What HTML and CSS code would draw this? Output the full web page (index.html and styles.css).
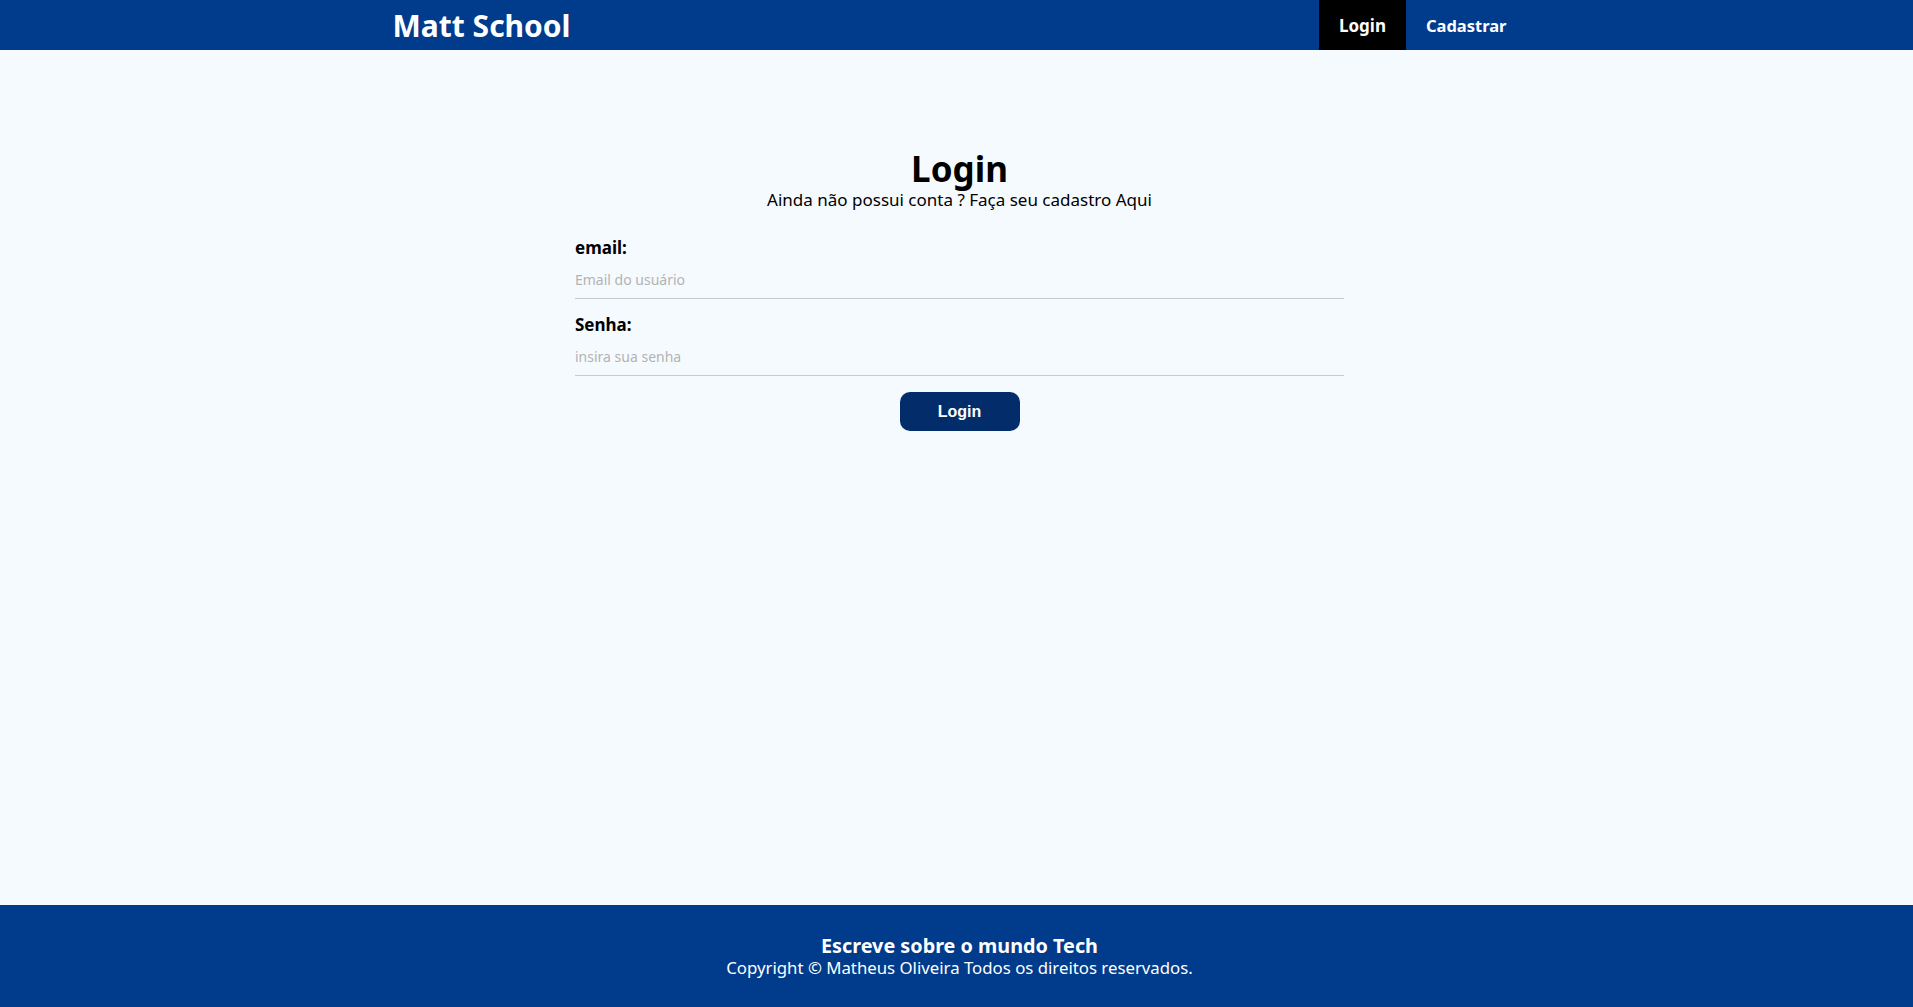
FILE: index.html
```html
<!DOCTYPE html>
<html lang="pt-BR">
<head>
<meta charset="utf-8">
<title>Matt School - Login</title>
<link rel="stylesheet" href="styles.css">
</head>
<body>
<header class="topbar">
  <div class="topbar-inner">
    <a class="brand" href="#">Matt School</a>
    <nav class="nav">
      <a class="nav-link active" href="#">Login</a>
      <a class="nav-link" href="#">Cadastrar</a>
    </nav>
  </div>
</header>
<main class="main">
  <section class="login">
    <h1 class="login-title">Login</h1>
    <p class="login-sub">Ainda não possui conta ? Faça seu cadastro Aqui</p>
    <form class="form">
      <label class="label" for="email">email:</label>
      <input class="input" id="email" type="text" placeholder="Email do usuário">
      <label class="label" for="senha">Senha:</label>
      <input class="input" id="senha" type="password" placeholder="insira sua senha">
      <button class="btn" type="button">Login</button>
    </form>
  </section>
</main>
<footer class="footer">
  <p class="footer-title">Escreve sobre o mundo Tech</p>
  <p class="footer-copy">Copyright © Matheus Oliveira Todos os direitos reservados.</p>
</footer>
</body>
</html>
```
FILE: styles.css
```css
* { box-sizing: border-box; }
html, body { height: 100%; }
body {
  margin: 0;
  background: #f5faff;
  font-family: "Noto Sans", "Open Sans", sans-serif;
  color: #000;
  display: flex;
  flex-direction: column;
  min-height: 100vh;
}
.topbar {
  background: #003b8c;
  height: 50px;
  flex-shrink: 0;
}
.topbar-inner {
  width: 1140px;
  margin: 0 auto;
  height: 100%;
  display: flex;
  align-items: center;
  justify-content: space-between;
}
.brand {
  color: #fff;
  text-decoration: none;
  font-weight: 700;
  font-size: 30px;
  padding-left: 6px;
}
.nav { display: flex; height: 100%; }
.nav-link {
  display: flex;
  align-items: center;
  padding: 0 20px;
  color: #fff;
  text-decoration: none;
  font-weight: 700;
  font-size: 16.5px;
  height: 100%;
}
.nav-link.active { background: #000; font-size: 17px; }
.main { flex: 1; padding-top: 98px; padding-left: 6px; }
.login {
  width: 769px;
  margin: 0 auto;
  display: flex;
  flex-direction: column;
  align-items: center;
}
.login-title {
  margin: 0;
  font-size: 35px;
  font-weight: 700;
  line-height: 1.2;
}
.login-sub {
  margin: 0;
  font-size: 17px;
  line-height: 1.2;
}
.form {
  width: 100%;
  display: flex;
  flex-direction: column;
  align-items: stretch;
  margin-top: 28px;
}
.label {
  font-weight: 700;
  font-size: 17px;
  line-height: 20px;
}
.input {
  border: none;
  border-bottom: 1px solid #c9c9c9;
  background: transparent;
  font-family: inherit;
  font-size: 14px;
  line-height: 19px;
  height: 41px;
  padding: 12px 0 9px;
  margin-bottom: 16px;
  outline: none;
}
.input::placeholder { color: #b3b3b3; }
.btn {
  align-self: center;
  width: 120px;
  height: 39px;
  border: none;
  border-radius: 10px;
  background: #022d6a;
  color: #fff;
  font-family: "Liberation Sans", Arial, sans-serif;
  font-weight: 700;
  font-size: 16px;
}
.footer {
  background: #003b8c;
  height: 102px;
  flex-shrink: 0;
  display: flex;
  flex-direction: column;
  align-items: center;
  justify-content: center;
  padding-left: 6px;
  color: #fff;
}
.footer p { margin: 0; line-height: 1.2; }
.footer-title { font-weight: 700; font-size: 19.8px; }
.footer-copy { font-size: 16.8px; }
```
